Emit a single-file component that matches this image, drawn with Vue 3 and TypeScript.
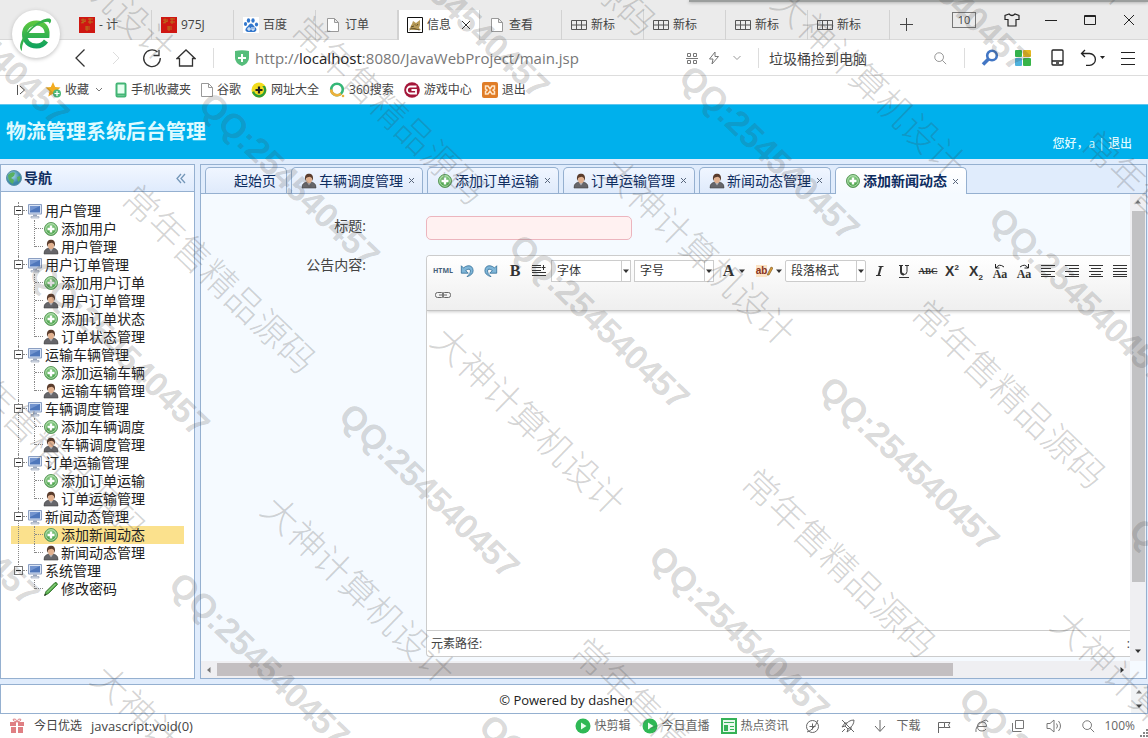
<script setup lang="ts">
import { ref } from 'vue'

interface BrowserTab { title: string; icon: string; active?: boolean }
interface TreeNode { label: string; icon: string }
interface TreeGroup { label: string; children: TreeNode[] }
interface PageTab { label: string; icon: string }
interface Mark { x: number; y: number; text: string; latin: boolean }

const browserTabs: BrowserTab[] = [
  { title: '- 计', icon: 'red' },
  { title: '975J', icon: 'red' },
  { title: '百度', icon: 'paw' },
  { title: '订单', icon: 'doc' },
  { title: '信息', icon: 'tomcat', active: true },
  { title: '查看', icon: 'doc' },
  { title: '新标', icon: 'grid' },
  { title: '新标', icon: 'grid' },
  { title: '新标', icon: 'grid' },
  { title: '新标', icon: 'grid' }
]

const bookmarks = [
  { label: '手机收藏夹', icon: 'mobile', narrow: true },
  { label: '谷歌', icon: 'doc', narrow: true },
  { label: '网址大全', icon: 'plusball' },
  { label: '360搜索', icon: 'ring' },
  { label: '游戏中心', icon: 'game' },
  { label: '退出', icon: 'exit' }
]

const add = (label: string): TreeNode => ({ label, icon: 'add' })
const man = (label: string): TreeNode => ({ label, icon: 'user' })
const tree: TreeGroup[] = [
  { label: '用户管理', children: [add('添加用户'), man('用户管理')] },
  { label: '用户订单管理', children: [add('添加用户订单'), man('用户订单管理'), add('添加订单状态'), man('订单状态管理')] },
  { label: '运输车辆管理', children: [add('添加运输车辆'), man('运输车辆管理')] },
  { label: '车辆调度管理', children: [add('添加车辆调度'), man('车辆调度管理')] },
  { label: '订单运输管理', children: [add('添加订单运输'), man('订单运输管理')] },
  { label: '新闻动态管理', children: [add('添加新闻动态'), man('新闻动态管理')] },
  { label: '系统管理', children: [{ label: '修改密码', icon: 'pencil' }] }
]

const pageTabs: PageTab[] = [
  { label: '起始页', icon: '' },
  { label: '车辆调度管理', icon: 'user' },
  { label: '添加订单运输', icon: 'add' },
  { label: '订单运输管理', icon: 'user' },
  { label: '新闻动态管理', icon: 'user' },
  { label: '添加新闻动态', icon: 'add' }
]
const current = ref('添加新闻动态')
const title = ref('')
const query = ref('垃圾桶捡到电脑')

const formatTools = ['italic', 'underline', 'strike', 'sup', 'sub', 'upper', 'lower', 'left', 'right', 'center', 'justify']

const marks: Mark[] = []
for (let row = -2; row <= 2; row++) {
  for (let step = -5; step <= 5; step++) {
    const dx = row * 480 + step * 170
    const dy = row * -27 - step * 169
    const near = (x: number, y: number) => x > -180 && x < 1140 && y > -180 && y < 745
    if (near(337 + dx, 418 + dy)) marks.push({ x: 337 + dx, y: 418 + dy, text: 'QQ:254540457', latin: true })
    if (near(429 + dx, 343 + dy)) {
      marks.push({ x: 429 + dx, y: 343 + dy, text: row % 2 === 0 ? '大神计算机设计' : '常年售精品源码', latin: false })
    }
  }
}
</script>

<template>
  <div class="window">
    <svg class="defs" aria-hidden="true">
      <defs>
        <linearGradient id="gGreen" x1="0" y1="0" x2="0" y2="1"><stop offset="0" stop-color="#8fd08b" /><stop offset="1" stop-color="#3f9a40" /></linearGradient>
        <linearGradient id="gLogo" x1="0" y1="0" x2="0" y2="1"><stop offset="0" stop-color="#5cc640" /><stop offset="1" stop-color="#12a35c" /></linearGradient>
        <radialGradient id="gGlobe" cx=".4" cy=".35"><stop offset="0" stop-color="#a9dcf0" /><stop offset="1" stop-color="#3c87a8" /></radialGradient>
      </defs>
      <symbol id="i-red" viewBox="0 0 16 16"><path d="M0 0h16v16H0z" fill="#cf1712" /><path d="M2 3h5M4 1.500v5M2 6l5-2M9 2h5M9 5h5M11 1v6M6 10h5M6 12h5M8 9v5" stroke="#b8701c" fill="none" /></symbol>
      <symbol id="i-paw" viewBox="0 0 16 16"><path d="M0 0h16v16H0z" fill="#fff" /><g fill="#3277cc"><ellipse cx="5.500" cy="3.500" rx="1.700" ry="2.300" /><ellipse cx="10" cy="3.500" rx="1.700" ry="2.300" /><ellipse cx="2.500" cy="7" rx="1.600" ry="2" /><ellipse cx="13.500" cy="7.500" rx="1.600" ry="2" /><path d="M8 6.500c2 0 2.500 2.500 4.500 4 2 2 .5 4.500-1.500 4.500H5c-2.500 0-3.500-2.500-1.500-4.500 2-1.500 2.500-4 4.500-4z" /></g><path d="M5 11h2v2H5zM9 10v3h2v-3" stroke="#fff" fill="none" /></symbol>
      <symbol id="i-doc" viewBox="0 0 16 16"><path d="M2.500 1.500h7l4 4v9h-11zM9.500 1.500v4h4" fill="#fff" stroke="#999" /></symbol>
      <symbol id="i-tomcat" viewBox="0 0 16 16"><path d="M.5.5h15v15H.5z" fill="#fff" stroke="#111" /><path d="M2 12c2-1 1-3 3-5l1-3 3 2 4-3v5l-1 3 2 2H5z" fill="#b79a56" /><path d="M2.500 13c3-3 5-1 10 0M8 7.500l1 1M11 7l-1 1.500M4 10l3-1" stroke="#5d4d28" fill="none" /></symbol>
      <symbol id="i-grid" viewBox="0 0 16 16"><path d="M.5 3.500h15v9H.5zM.5 8h15M5.500 3.500v9M10.500 3.500v9" fill="none" stroke="#555" /></symbol>
      <symbol id="i-mobile" viewBox="0 0 16 16"><rect x="3.500" y="1.500" width="9" height="13" rx="1" fill="#e7fff0" stroke="#43b575" stroke-width="2" /><path d="M3 12.500h10" stroke="#43b575" stroke-width="2" /></symbol>
      <symbol id="i-plusball" viewBox="0 0 16 16"><circle cx="8" cy="8" r="7.500" fill="#f2dc1e" /><path d="M1 10c4-1 7-7 13-6a7.500 7.500 0 0 1-5 11.500C5 16 2 13 1 10z" fill="#2c9e3b" /><circle cx="8" cy="8" r="5" fill="#f2dc1e" /><path d="M8 4.500v7M4.500 8h7" stroke="#222" stroke-width="2.200" /></symbol>
      <symbol id="i-ring" viewBox="0 0 16 16"><circle cx="8" cy="7.500" r="5.800" fill="none" stroke="#35b777" stroke-width="2.600" /><path d="M2.200 7.500a5.800 5.800 0 0 0 9.800 4.100" fill="none" stroke="#eeb03b" stroke-width="2.600" /><circle cx="14" cy="14" r="1.300" fill="#eeb03b" /></symbol>
      <symbol id="i-game" viewBox="0 0 16 16"><circle cx="8" cy="8" r="7.800" fill="#a5173a" /><path d="M12.500 4.500H6.500a3.500 3.500 0 0 0 0 7H12V8H7.500" fill="none" stroke="#fff" stroke-width="1.800" /></symbol>
      <symbol id="i-exit" viewBox="0 0 16 16"><rect width="16" height="16" rx="2" fill="#e07d27" /><path d="M3.500 4h2.500l2 3 2-3h2.500v3L11 8l1.500 1.500V12H10L8 9l-2 3H3.500V9.500L5 8 3.500 7z" fill="none" stroke="#ffe6c9" stroke-width="1.500" /></symbol>
      <symbol id="i-add" viewBox="0 0 16 16"><circle cx="8" cy="8" r="6.500" fill="url(#gGreen)" stroke="#5d9a5c" /><circle cx="8" cy="8" r="5.300" fill="none" stroke="#c3e6bf" stroke-width=".8" /><path d="M8 4.500v7M4.500 8h7" stroke="#fff" stroke-width="2.400" /></symbol>
      <symbol id="i-user" viewBox="0 0 16 16"><path d="M1 15q-.5-4 3-5.500l2-.5h4l2 .5q3.500 1.500 3 5.500z" fill="#66666a" stroke="#444" stroke-width=".6" /><path d="M6 9.500l2 3 2-3" fill="#b5b5bb" /><ellipse cx="8" cy="6.500" rx="3" ry="3.700" fill="#e2b18f" /><path d="M4.300 8C3 2.500 5.500.7 8 .7s5 1.800 3.700 7.300L10.800 5 9 3.800 6.500 4.300 5.200 5z" fill="#5a3c2c" /></symbol>
      <symbol id="i-pencil" viewBox="0 0 16 16"><path d="M1.500 14.500l1.500-4L12 1.500q2-.5 2.500 2L5.500 12.500z" fill="#4fa845" stroke="#2d6b27" stroke-width=".8" /><path d="M4 11.500l8.500-8.500" stroke="#a7dd9b" /><path d="M1.300 14.700l.8-2 1.300 1.200z" fill="#222" /></symbol>
      <symbol id="i-pc" viewBox="0 0 16 16"><path d="M1.500 1.500h13v9.500h-13z" fill="#dbe5f5" stroke="#8b9fc2" /><path d="M3 3h10v6.500H3z" fill="#4f77bb" /><path d="M3 3h10L3 8z" fill="#7495cf" /><path d="M6 11.500h4v1.500H6z" fill="#9aa7bf" /><path d="M4 13.500h8v1.500H4z" fill="#e0e5ee" stroke="#8b98af" stroke-width=".6" /></symbol>
      <symbol id="i-play" viewBox="0 0 16 16"><circle cx="8" cy="8" r="7.500" fill="#2fb855" /><path d="M6 4.500l5.500 3.500L6 11.500z" fill="#e9ffee" /></symbol>
      <symbol id="i-search" viewBox="0 0 16 16"><circle cx="7" cy="7" r="5" fill="none" stroke="currentColor" /><path d="M10.600 10.600L15 15" stroke="currentColor" /></symbol>
      <symbol id="i-italic" viewBox="0 0 20 16"><path d="M8.500 3.500h5M6 12.500h5" stroke="#333" /><path d="M11 3.500L8.500 12.500" stroke="#333" stroke-width="2" /></symbol>
      <symbol id="i-underline" viewBox="0 0 20 16"><path d="M5 2.500h4M11 2.500h4M5 14.500h10M13 2.500v6q0 3-3 3t-3-3" fill="none" stroke="#333" /><path d="M7 2.500v6q0 3 3 3" fill="none" stroke="#333" stroke-width="2" /></symbol>
      <symbol id="i-left" viewBox="0 0 20 16"><path d="M3 2.500h14M3 5.500h10M3 8.500h14M3 11.500h10M3 13.500h14" stroke="#333" /></symbol>
      <symbol id="i-right" viewBox="0 0 20 16"><path d="M3 2.500h14M7 5.500h10M3 8.500h14M7 11.500h10M3 13.500h14" stroke="#333" /></symbol>
      <symbol id="i-center" viewBox="0 0 20 16"><path d="M3 2.500h14M5 5.500h10M3 8.500h14M5 11.500h10M3 13.500h14" stroke="#333" /></symbol>
      <symbol id="i-justify" viewBox="0 0 20 16"><path d="M3 2.500h14M3 5.500h14M3 8.500h14M3 11.500h14M3 13.500h14" stroke="#333" /></symbol>
      <symbol id="i-undo" viewBox="0 0 16 16"><path d="M1.500 2v8.500h8L6.500 7.500q5-3.500 5.500.5.2 3-4 6.500Q15 12.500 15 7.500 14.500 1.500 9 2 6 2.500 4 4.500z" fill="#7fb6d8" stroke="#2f6c96" stroke-width=".9" /></symbol>
      <symbol id="i-tri" viewBox="0 0 8 8"><path d="M1 2.500h6L4 6z" fill="currentColor" /></symbol>
    </svg>

    <header class="tabstrip">
      <button v-for="(t, i) in browserTabs" :key="i" class="btab" :class="{ on: t.active }">
        <svg class="i16"><use :href="'#i-' + t.icon" /></svg>
        <span>{{ t.title }}</span>
        <svg v-if="t.active" class="x" viewBox="0 0 10 10"><path d="M1 1l8 8M9 1l-8 8" stroke="#333" /></svg>
      </button>
      <button class="cell plus" aria-label="新建标签"><svg width="14" height="14"><path d="M7.500 1v13M1 7.500h13" stroke="#444" /></svg></button>
      <div class="winctl">
        <span class="count">10</span>
        <button class="cell w32" aria-label="皮肤"><svg width="16" height="14" fill="none" stroke="#222" stroke-width="1.200"><path d="M5 1L1 2.500v4h3V13h8V6.500h3v-4L11 1q-3 3-6 0z" /></svg></button>
        <button class="cell w39" aria-label="最小化"><svg width="12" height="12"><path d="M0 6.500h12" stroke="#222" /></svg></button>
        <button class="cell w39" aria-label="最大化"><svg width="12" height="12"><path d="M.5 1.500h11v9H.5zM.5 2.500h11" fill="none" stroke="#222" /></svg></button>
        <button class="cell w39" aria-label="关闭"><svg width="12" height="12"><path d="M1 1l10 10M11 1L1 11" stroke="#222" /></svg></button>
      </div>
      <div class="topshade"></div>
    </header>
    <div class="logo"><svg width="36" height="36" viewBox="0 0 36 36"><path d="M9 19.500h20c1-9-5-12.500-10.500-12.500C11 7 6.500 12 6.500 18.500S11 30 18.500 30q6 0 9.500-5" fill="none" stroke="url(#gLogo)" stroke-width="5" /><path d="M4 35C-1 31 4 20 14 11S33 1 33 4q.5 2-1.500 4 .5-4-9-.5C12 12 3 26 4 35z" fill="#35b24c" /></svg></div>

    <nav class="address">
      <button class="cell w36" aria-label="后退"><svg width="12" height="20"><path d="M10.500 1.500L2 10l8.500 8.500" fill="none" stroke="#333" stroke-width="1.300" /></svg></button>
      <button class="cell w36" aria-label="前进"><svg width="10" height="14"><path d="M2 1l6 6-6 6" fill="none" stroke="#ddd" /></svg></button>
      <button class="cell w36" aria-label="刷新"><svg width="20" height="20"><path d="M15.500 4A8.300 8.300 0 1 0 18.300 10M11.500 7.500H17V2" fill="none" stroke="#333" stroke-width="1.300" /></svg></button>
      <button class="cell home" aria-label="主页"><svg width="20" height="20"><path d="M1 10.500L10 2l9 8.500h-2.500V18h-13v-7.500z" fill="none" stroke="#333" stroke-width="1.300" /></svg></button>
      <i class="sep s1"></i>
      <svg class="shield" width="14" height="16"><path d="M0 1q7-1.500 14 0v7q0 5-7 8-7-3-7-8z" fill="#56bd7b" /><path d="M7 4v8M3 8h8" stroke="#fff" stroke-width="2" /></svg>
      <div class="url" role="textbox" aria-label="地址" contenteditable="true">http://<b>localhost</b>:8080/JavaWebProject/main.jsp</div>
      <button class="cell w22" aria-label="二维码"><svg width="12" height="12" fill="none" stroke="#777"><path d="M1.500 1.500h3v3h-3zM7.500 1.500h3v3h-3zM1.500 8.500h3v3h-3zM7.500 8.500h3v3h-3zM0 6.500h12" /></svg></button>
      <button class="cell w22" aria-label="加速"><svg width="12" height="14"><path d="M7 1L1.500 8H5l-1 5 6.500-7.500H7z" fill="none" stroke="#777" /></svg></button>
      <button class="cell w24" aria-label="更多"><svg width="10" height="8"><path d="M1.500 2L5 5.500 8.500 2" fill="none" stroke="#999" /></svg></button>
      <i class="sep s2"></i>
      <input v-model="query" class="search" aria-label="搜索" />
      <button class="cell w24 gray" aria-label="搜索"><svg class="i14"><use href="#i-search" /></svg></button>
      <i class="sep s3"></i>
      <button class="cell w32" aria-label="查找"><svg width="18" height="18"><circle cx="11" cy="6.500" r="4.800" fill="none" stroke="#4276c4" stroke-width="2.600" /><path d="M7.500 10L2 15.500" stroke="#4276c4" stroke-width="3.500" /></svg></button>
      <button class="cell w34" aria-label="应用"><svg width="16" height="16"><rect width="7" height="7" rx="1" fill="#35b24c" /><rect x="8" width="8" height="7" rx="1" fill="#e4b51f" /><rect y="8" width="7" height="8" rx="1" fill="#4fb2dc" /><rect x="8" y="8" width="8" height="8" rx="1" fill="#38b549" /></svg></button>
      <button class="cell w34" aria-label="手机"><svg width="13" height="17" fill="none" stroke="#222" stroke-width="1.300"><rect x="1" y="1" width="11" height="15" rx="1" /><path d="M1 12h11M5 14h3" /></svg></button>
      <button class="cell w38" aria-label="恢复"><svg width="26" height="18"><path d="M1.500 4.500h8a5.800 5.800 0 0 1 0 11.800H6M5 1L1.500 4.500 5 8" fill="none" stroke="#222" stroke-width="1.300" /><path d="M20 7h5l-2.500 3z" fill="#222" /></svg></button>
      <button class="cell w32" aria-label="菜单"><svg width="14" height="14"><path d="M0 1.500h14M0 7.500h14M0 13.500h14" stroke="#222" /></svg></button>
    </nav>

    <nav class="bookmarks">
      <svg class="expand" width="10" height="10"><path d="M1.500 0v10M4 1l4.500 4L4 9" fill="none" stroke="#555" /></svg>
      <a href="#" class="fav"><svg width="17" height="16" viewBox="0 0 17 16"><path d="M8 0l2.200 5 5.300.5-4 3.700 1.200 5.300L8 11.700l-4.700 2.800 1.200-5.300-4-3.700L5.800 5z" fill="#f3ac20" /><circle cx="12" cy="11.500" r="4" fill="#4cb878" /><path d="M12 9v5M9.500 11.500h5" stroke="#fff" stroke-width="1.200" /></svg><span>收藏</span></a>
      <svg class="chev" width="8" height="6"><path d="M1 1l3 3 3-3" fill="none" stroke="#777" /></svg>
      <a v-for="b in bookmarks" :key="b.label" href="#"><svg class="i16" :class="{ narrow: b.narrow }"><use :href="'#i-' + b.icon" /></svg><span>{{ b.label }}</span></a>
    </nav>

    <div class="page">
      <header class="banner">
        <h1>物流管理系统后台管理</h1>
        <p>您好，a | <a href="#">退出</a></p>
      </header>

      <div class="middle">
        <aside class="west">
          <div class="west-head">
            <svg width="16" height="16"><circle cx="8" cy="8" r="7.500" fill="url(#gGlobe)" stroke="#5c93a8" /><path d="M2 5q4-4 7-2l-1 3-3 2 3 2-1 4Q2 12 2 5zM11 7l3-1q1 4-2 6z" fill="#58b062" /></svg>
            <h2>导航</h2>
            <button class="fold" aria-label="收起"><svg width="10" height="11"><path d="M5 1L1 5.500 5 10M9 1L5 5.500 9 10" fill="none" stroke="#7396b8" stroke-width="1.300" /></svg></button>
          </div>
          <ul class="tree">
            <li v-for="g in tree" :key="g.label">
              <div class="node">
                <span class="hit"><i class="box"></i></span>
                <svg class="i16"><use href="#i-pc" /></svg><span class="txt">{{ g.label }}</span>
              </div>
              <ul>
                <li v-for="c in g.children" :key="c.label" class="leaf" :class="{ sel: c.label === current }">
                  <span class="indent"></span><span class="join"></span>
                  <svg class="i16"><use :href="'#i-' + c.icon" /></svg><span class="txt">{{ c.label }}</span>
                </li>
              </ul>
            </li>
          </ul>
        </aside>

        <main class="center">
          <div class="ptabs">
            <div v-for="t in pageTabs" :key="t.label" class="ptab" :class="{ on: t.label === current, plain: !t.icon }">
              <button class="ptitle" @click="current = t.label"><svg v-if="t.icon" class="i16"><use :href="'#i-' + t.icon" /></svg>{{ t.label }}</button>
              <button v-if="t.icon" class="pclose" aria-label="关闭"><svg width="7" height="7"><path d="M1 1l5 5M6 1L1 6" stroke="#59677d" /></svg></button>
            </div>
          </div>
          <div class="body">
            <form class="form" @submit.prevent>
              <label for="news-title">标题:</label>
              <input id="news-title" v-model="title" class="title" />
              <label for="news-body">公告内容:</label>
              <div class="editor">
                <div class="tools">
                  <button class="tool" aria-label="HTML代码"><span class="html">HTML</span></button>
                  <button class="tool" aria-label="后退"><svg class="i14"><use href="#i-undo" /></svg></button>
                  <button class="tool" aria-label="前进"><svg class="i14 flip"><use href="#i-undo" /></svg></button>
                  <button class="tool serif" aria-label="粗体">B</button>
                  <button class="tool" aria-label="行高"><svg width="14" height="14"><path d="M0 1.500h9M0 3.500h9M0 6.500h9M0 8.500h14M0 11.500h14M11.500 1v5M9.500 3.500h4" stroke="#333" /></svg></button>
                  <span class="combo c1"><select aria-label="字体"><option>字体</option></select><i><svg class="i8"><use href="#i-tri" /></svg></i></span>
                  <span class="combo c2"><select aria-label="字号"><option>字号</option></select><i><svg class="i8"><use href="#i-tri" /></svg></i></span>
                  <button class="tool wide serif" aria-label="文字颜色">A<svg class="i8"><use href="#i-tri" /></svg></button>
                  <button class="tool mid" aria-label="背景颜色"><span class="ab">ab</span><svg width="6" height="12"><path d="M0 10l4-8 2 1-4 7z" fill="#d99b35" stroke="#73501c" stroke-width=".6" /></svg><svg class="i8"><use href="#i-tri" /></svg></button>
                  <span class="combo c3"><select aria-label="段落格式"><option>段落格式</option></select><i><svg class="i8"><use href="#i-tri" /></svg></i></span>
                  <button v-for="f in formatTools" :key="f" class="tool" :aria-label="f">
                    <span v-if="f === 'strike'" class="abc">ABC</span>
                    <span v-else-if="f === 'sup'" class="script">X<sup>2</sup></span>
                    <span v-else-if="f === 'sub'" class="script">X<sub>2</sub></span>
                    <span v-else-if="f === 'upper' || f === 'lower'" class="case"><svg :class="{ flip: f === 'lower' }" width="12" height="5"><path d="M2 4q3-5 8-1M1.500 0v4h4" fill="none" stroke="#222" /></svg><em>Aa</em></span>
                    <svg v-else width="20" height="16"><use :href="'#i-' + f" /></svg>
                  </button>
                  <button class="tool" aria-label="链接"><svg width="16" height="8" fill="none" stroke="#666"><rect x=".5" y="1.500" width="8" height="5" rx="2" /><rect x="7.500" y="1.500" width="8" height="5" rx="2" /><path d="M4 4h8" /></svg></button>
                </div>
                <textarea id="news-body"></textarea>
                <div class="path">元素路径:<span>:</span></div>
              </div>
            </form>
            <div class="vbar"><svg class="i8 up"><use href="#i-tri" /></svg><div class="vtrack"><i></i></div><svg class="i8"><use href="#i-tri" /></svg></div>
            <div class="hbar"><svg class="i8 lt"><use href="#i-tri" /></svg><div class="htrack"><i></i></div><svg class="i8 rt"><use href="#i-tri" /></svg></div>
          </div>
        </main>
      </div>

      <footer class="south">
        <p>© Powered by dashen</p>
        <div class="sbar"><svg class="i8 up"><use href="#i-tri" /></svg><svg class="i8"><use href="#i-tri" /></svg></div>
      </footer>
    </div>

    <footer class="status">
      <svg width="16" height="16"><path d="M1 4h6v4H1zM9 4h6v4H9zM2 9h5v6H2zM9 9h5v6H9z" fill="#df7f83" /><path d="M8 4Q3 3 4.500 1 7 0 8 4q1-4 3.500-3Q13 3 8 4" fill="none" stroke="#df7f83" /></svg>
      <a href="#" class="pick">今日优选</a>
      <span class="js">javascript:void(0)</span>
      <div class="sright">
        <a href="#"><svg class="i16"><use href="#i-play" /></svg>快剪辑</a>
        <a href="#"><svg class="i16"><use href="#i-play" /></svg>今日直播</a>
        <a href="#" class="hot"><svg width="16" height="16"><path d="M1 1h14v14H1z" fill="#e8f9ec" stroke="#36b257" stroke-width="2" /><path d="M3 4.500h10M9 8.500h4M9 11.500h4" stroke="#36b257" /><path d="M3 7h4v6H3z" fill="#36b257" /></svg>热点资讯</a>
        <button class="cell w36" aria-label="加速器"><svg width="15" height="15" fill="none" stroke="#666"><circle cx="7.500" cy="7.500" r="6" /><path d="M4.500 7.500h6M7.500 4.500v6M2 13Q9 11 13 1" /></svg></button>
        <button class="cell w36" aria-label="火箭"><svg width="14" height="14" fill="none" stroke="#666"><path d="M13 1Q7 1 4 7l3 3q6-3 6-9zM4 7L1 8l3-4h2M7 10l-1 3 4-3V8M1 13l3-3M1 1l12 12" /></svg></button>
        <button class="down"><svg width="12" height="14"><path d="M6 1v11M1 7l5 5.500L11 7" fill="none" stroke="#666" /></svg>下载</button>
        <button class="cell w38" aria-label="旗标"><svg width="14" height="13"><path d="M1.500 13V2.500h6v5h-6M7.500 2.500H13L11.500 5 13 7.500H7.500" fill="none" stroke="#666" /></svg></button>
        <button class="cell w38" aria-label="内核"><svg width="14" height="14" fill="none" stroke="#777"><path d="M2.500 7.500h9Q11.500 3 7 3T2.500 7.500 7 12q3 0 4-2M1 13Q0 8 6 3.500T13 3" /></svg></button>
        <button class="cell w34" aria-label="窗口"><svg width="14" height="14"><path d="M4.500 1.500h8v8h-8zM1.500 4v8.500h9" fill="none" stroke="#777" /></svg></button>
        <button class="cell w38" aria-label="声音"><svg width="16" height="14" fill="none" stroke="#777"><path d="M1 4.500h3L8 1v12L4 9.500H1zM10.500 4.500q2 2.500 0 5M12.500 2q4 5 0 10" /></svg></button>
        <button class="zoom"><svg class="i14"><use href="#i-search" /></svg>100%</button>
      </div>
      <svg class="grip" width="9" height="9"><path d="M7 1h2M4 4h2M7 4h2M1 7h2M4 7h2M7 7h2" stroke="#888" stroke-width="2" /></svg>
    </footer>

    <svg class="marks" aria-hidden="true">
      <text v-for="(m, i) in marks" :key="i" :class="{ latin: m.latin }" :transform="`translate(${m.x} ${m.y}) rotate(44)`">{{ m.text }}</text>
    </svg>
  </div>
</template>

<style>
body { margin: 0; overflow: hidden; }
</style>

<style scoped>
.window { position: relative; display: flex; flex-direction: column; height: 100vh; overflow: hidden; background: #fff; color: #444; font: 12px/16px "Open Sans", "Noto Sans CJK SC", sans-serif; }
.window * { box-sizing: border-box; }
button, input, select, textarea { font: inherit; color: inherit; margin: 0; padding: 0; border: 0; background: none; outline: 0; }
button { flex: none; white-space: nowrap; }
a { color: inherit; text-decoration: none; }
ul { list-style: none; margin: 0; padding: 0; }
h1, h2, p { margin: 0; }
svg { flex: none; display: block; }
.defs { position: absolute; width: 0; height: 0; }
.i16 { width: 16px; height: 16px; }
.i14 { width: 14px; height: 14px; }
.i8 { width: 8px; height: 8px; }
.flip { transform: scaleX(-1); }
.cell { display: flex; align-items: center; justify-content: center; height: 100%; }
.w22 { width: 22px; } .w24 { width: 24px; } .w32 { width: 32px; } .w34 { width: 34px; } .w36 { width: 36px; } .w38 { width: 38px; } .w39 { width: 39px; }

.tabstrip { position: relative; display: flex; flex: none; height: 40px; padding-left: 70px; background: #ebebeb; border-bottom: 1px solid #d8d8d8; }
.btab { display: flex; align-items: center; gap: 4px; width: 82px; height: 30px; margin-top: 10px; padding-left: 9px; border-right: 1px solid #d2d2d2; overflow: hidden; }
.btab.on { background: #fff; border-left: 1px solid #d2d2d2; padding-left: 8px; }
.btab .x { width: 10px; height: 10px; margin-left: 6px; }
.plus { width: 32px; padding-top: 9px; }
.winctl { display: flex; align-items: center; margin-left: auto; height: 40px; }
.count { width: 24px; margin-right: 20px; border: 1px solid #777; font-size: 11px; line-height: 14px; text-align: center; }
.winctl .w32 { margin-right: 3px; }
.topshade { position: absolute; top: 0; right: 0; width: 40%; height: 2px; background: #9b9e9d; box-shadow: 0 1px 3px #aaa; }
.logo { position: absolute; left: 12px; top: 10px; z-index: 2; display: flex; align-items: center; justify-content: center; width: 48px; height: 48px; border-radius: 50%; background: #fff; box-shadow: 0 1px 4px #bbb; }

.address { display: flex; flex: none; align-items: center; height: 36px; padding: 0 4px 0 62px; border-bottom: 1px solid #ddd; }
.home { width: 32px; }
.sep { width: 1px; height: 20px; background: #ddd; }
.s1 { margin-left: 11px; } .s2 { margin-left: 9px; } .s3 { margin: 0 9px 0 12px; }
.shield { margin: 0 6px 0 21px; }
.url { flex: 1; min-width: 0; color: #777; font-size: 15px; line-height: 20px; white-space: nowrap; overflow: hidden; outline: 0; }
.url b { font-weight: 400; color: #222; }
.search { width: 169px; padding-left: 10px; font-size: 14px; line-height: 20px; height: 24px; }
.gray { color: #888; }

.bookmarks { display: flex; flex: none; align-items: center; height: 28px; padding-left: 16px; }
.bookmarks a { display: flex; align-items: center; gap: 4px; margin-right: 10px; white-space: nowrap; }
.bookmarks .fav { gap: 3px; margin: 0 6px 0 19px; }
.bookmarks .narrow { margin: 0 -2px; }
.chev { margin-right: 12px; }

.page { display: flex; flex: 1; flex-direction: column; min-height: 0; background: #e0ecfc; }
.banner { display: flex; flex: none; justify-content: space-between; height: 55px; padding: 0 16px 0 6px; background: #00b0ec; border-top: 1px solid #5fc6ef; color: #defaff; }
.banner h1 { font-size: 20px; line-height: 54px; font-weight: 700; }
.banner p { align-self: flex-end; margin-bottom: 7px; font-weight: 500; }
.middle { display: flex; flex: 1; gap: 5px; min-height: 0; padding-top: 5px; }
.west, .center { display: flex; flex-direction: column; border: 1px solid #95b0d0; min-height: 0; }
.west { flex: none; width: 195px; background: #fff; }
.west-head { display: flex; flex: none; align-items: center; height: 27px; padding: 0 8px 0 5px; background: linear-gradient(#f2f7ff, #dfebfd); border-bottom: 1px solid #95b0d0; }
.west-head h2 { flex: 1; margin-left: 2px; color: #0e2d5f; font-size: 14px; line-height: 20px; }
.tree { padding: 10px; font-size: 14px; line-height: 18px; color: #222; }
.tree > li { position: relative; }
.tree > li::before { content: ""; position: absolute; left: 7px; top: 0; bottom: 0; border-left: 1px dotted #888; }
.tree > li:last-child::before { bottom: auto; height: 9px; }
.node, .leaf { display: flex; align-items: center; height: 18px; white-space: nowrap; }
.hit, .indent, .join { position: relative; flex: none; width: 16px; height: 18px; }
.hit::after { content: ""; position: absolute; left: 12px; right: 0; top: 8px; border-top: 1px dotted #888; }
.box { position: absolute; left: 3px; top: 4px; width: 9px; height: 9px; border: 1px solid #777; background: #fff; }
.box::after { content: ""; position: absolute; left: 1px; right: 1px; top: 3px; height: 1px; background: #222; }
.join::before { content: ""; position: absolute; left: 7px; top: 0; height: 18px; border-left: 1px dotted #888; }
.leaf:last-child .join::before { height: 9px; }
.join::after { content: ""; position: absolute; left: 8px; right: 0; top: 8px; border-top: 1px dotted #888; }
.txt { margin-left: 2px; }
.sel { background: #fbe18d; }

.center { flex: 1; min-width: 0; background: #f5faff; margin-right: 1px; }
.ptabs { display: flex; flex: none; align-items: flex-end; gap: 4px; height: 29px; padding-left: 4px; background: #e0ecfc; border-bottom: 1px solid #95b0d0; }
.ptab { display: flex; align-items: center; width: 132px; height: 26px; padding: 0 7px 0 9px; border: 1px solid #95b0d0; border-bottom: 0; border-radius: 5px 5px 0 0; background: linear-gradient(#f0f6ff, #dfeafb); color: #0e2d5f; font-size: 14px; line-height: 20px; }
.ptab.plain { width: 82px; padding-left: 28px; }
.ptab.on { height: 27px; margin-bottom: -1px; background: linear-gradient(#fff, #f5faff); font-weight: 700; }
.ptitle { display: flex; align-items: center; gap: 2px; }
.pclose { margin-left: 5px; }

.body { display: grid; flex: 1; grid-template: minmax(0, 1fr) 17px / minmax(0, 1fr) 16px; min-height: 0; }
.form { display: grid; grid-template: 24px minmax(0, 1fr) / 165px minmax(0, 1fr); gap: 15px 60px; padding: 22px 0 4px; min-height: 0; color: #444; font-size: 14px; line-height: 20px; }
.form label { text-align: right; }
.title { width: 206px; height: 24px; padding: 0 6px; border: 1px solid #ecb5be; border-radius: 5px; background: #fff1f1; }
.editor { display: flex; flex-direction: column; min-height: 0; border: 1px solid #ccc; border-right: 0; border-radius: 4px 0 0 4px; background: #fff; overflow: hidden; }
.tools { display: flex; flex-wrap: wrap; align-content: flex-start; flex: none; height: 55px; padding: 3px 0 0 4px; background: linear-gradient(#fff, #efefef); border-bottom: 1px solid #c4c4c4; box-shadow: 0 1px 3px #ccc; color: #333; margin-right: -4px; }
.tool { display: flex; align-items: center; justify-content: center; width: 24px; height: 24px; font-size: 12px; line-height: 16px; }
.wide { width: 39px; gap: 4px; }
.mid { width: 31px; }
.mid .i8 { margin-left: 2px; }
.serif { font: 700 16px/20px "Liberation Serif", serif; }
.html { font-size: 7px; line-height: 10px; font-weight: 700; color: #456078; }
.ab { font: 700 10px/12px "Liberation Sans", sans-serif; color: #832; background: #fce3c4; }
.abc { font: 700 9px/12px "Liberation Serif", serif; text-decoration: line-through; }
.script { font: 700 14px/16px "Liberation Sans", sans-serif; white-space: nowrap; }
.script sup, .script sub { font-size: 8px; line-height: 0; }
.case { display: flex; flex-direction: column; align-items: center; }
.case em { font: 700 12px/10px "Liberation Serif", serif; }
.combo { display: flex; flex: none; width: 80px; height: 22px; margin: 1px 3px 0 0; border: 1px solid #ccc; background: #fff; font-size: 12px; }
.c2 { margin-right: 1px; }
.c3 { width: 81px; margin-right: 2px; border-radius: 2px; }
.combo select { flex: 1; min-width: 0; padding-left: 5px; appearance: none; }
.combo i { display: flex; align-items: center; justify-content: center; width: 9px; border-left: 1px solid #ccc; }
.editor textarea { flex: 1; min-height: 0; resize: none; padding: 8px; }
.path { display: flex; flex: none; justify-content: space-between; height: 26px; padding-left: 4px; border-top: 1px solid #ccc; font-size: 12px; line-height: 26px; }

.vbar, .hbar { display: flex; align-items: center; background: #efeff2; color: #333; }
.vbar { flex-direction: column; padding: 4px 1px 6px; }
.vtrack { flex: 1; width: 13px; margin: 5px 0 9px; }
.vtrack i { display: block; width: 100%; height: 87%; background: #c2c2c4; }
.hbar { gap: 4px; padding: 0 4px; }
.htrack { flex: 1; height: 13px; }
.htrack i { display: block; width: 82%; height: 100%; background: #c3bfc1; }
.up { transform: rotate(180deg); color: #777; }
.lt { transform: rotate(90deg); color: #777; }
.rt { transform: rotate(-90deg); }

.south { display: flex; flex: none; height: 30px; margin-top: 5px; border: 1px solid #95b0d0; background: #fff; }
.south p { flex: 1; text-align: center; font-size: 13px; line-height: 30px; color: #222; }
.sbar { display: flex; flex-direction: column; justify-content: space-around; align-items: center; width: 16px; background: #f1f3f5; }

.status { position: relative; display: flex; flex: none; align-items: center; height: 24px; padding: 0 13px 0 9px; color: #666; }
.pick { margin: 0 9px; color: #444; }
.js { font-size: 13px; color: #444; }
.sright { display: flex; align-items: center; height: 100%; margin-left: auto; }
.sright a { display: flex; align-items: center; gap: 3px; margin-right: 12px; white-space: nowrap; }
.sright .hot { margin-right: 6px; }
.down { display: flex; align-items: center; gap: 10px; margin: 0 5px 0 8px; }
.zoom { display: flex; align-items: center; gap: 9px; margin-left: 8px; }
.grip { position: absolute; right: 0; bottom: 0; }

.marks { position: absolute; inset: 0; z-index: 5; width: 100%; height: 100%; pointer-events: none; fill: rgba(70, 70, 70, .23); font: 300 36px "Noto Sans CJK SC", sans-serif; }
.marks .latin { font: 700 34px "Liberation Sans", sans-serif; fill: rgba(70, 70, 70, .21); }
</style>
